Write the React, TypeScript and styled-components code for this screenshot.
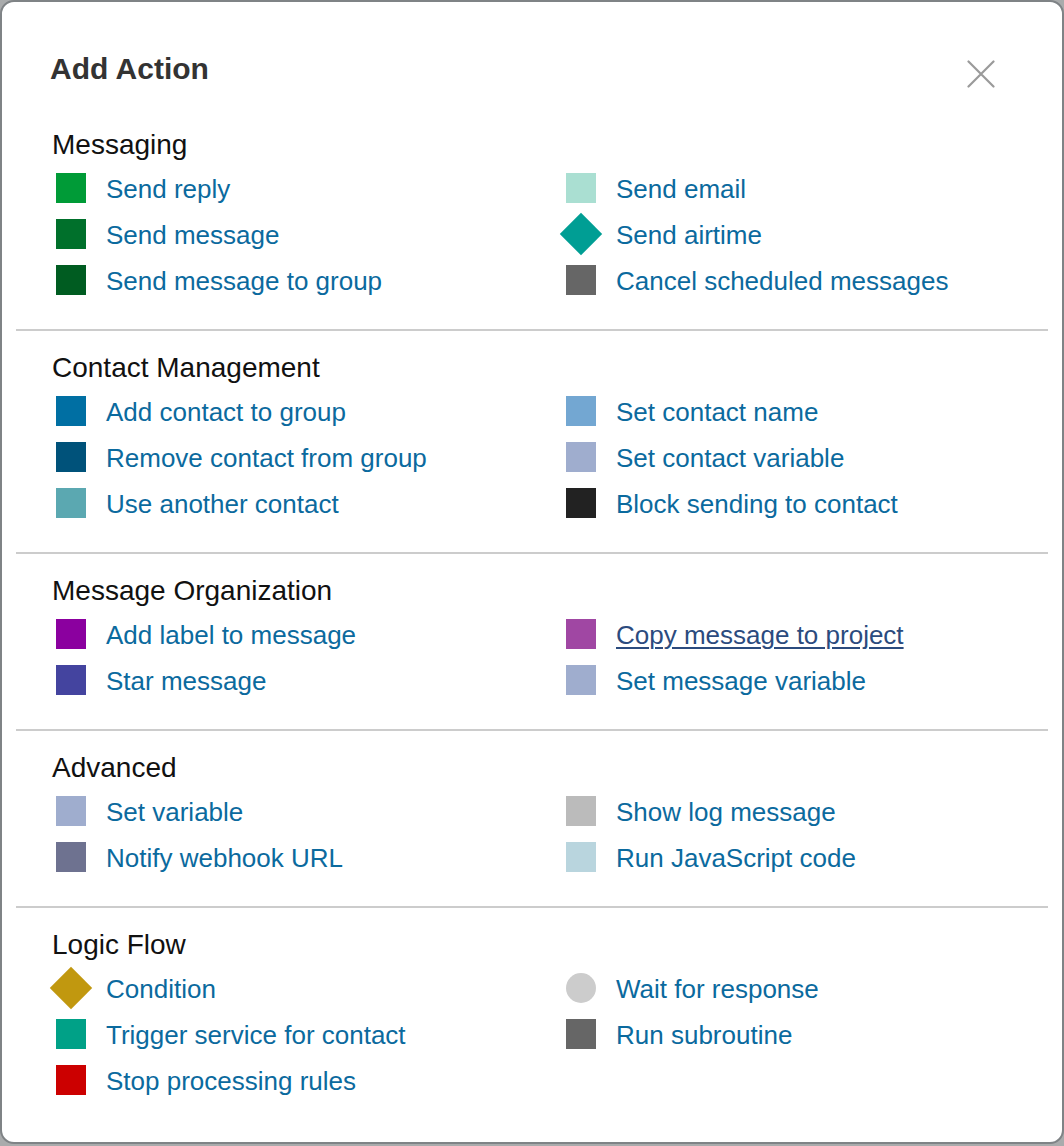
import React from "react";
import styled, { createGlobalStyle, css } from "styled-components";

const Global = createGlobalStyle`
  html, body {
    margin: 0;
    padding: 0;
    background: #a9abac;
    font-family: "Liberation Sans", Arial, sans-serif;
  }
  * { box-sizing: border-box; }
`;

const Dialog = styled.div`
  width: 1064px;
  height: 1144px;
  background: #ffffff;
  border: 2px solid #7f8386;
  border-radius: 14px;
  padding: 0 14px;
  overflow: hidden;
`;

const Header = styled.div`
  display: flex;
  justify-content: space-between;
  align-items: flex-start;
  padding: 49px 53px 0 34px;
  margin-bottom: 20px;
`;

const Title = styled.h1`
  margin: 0;
  font-size: 30px;
  line-height: 36px;
  font-weight: 700;
  color: #333333;
`;

const Close = styled.button`
  margin-top: 9px;
  width: 28px;
  height: 28px;
  padding: 0;
  border: 0;
  background: none;
  cursor: pointer;
  display: block;
`;

const Section = styled.section<{ $last?: boolean }>`
  padding: 20px 0 25px 34px;
  border-bottom: ${(p) => (p.$last ? "0" : "2px solid #cccccc")};
`;

const Heading = styled.h2`
  margin: 0 0 4px 0;
  padding-left: 2px;
  font-size: 28px;
  line-height: 34px;
  font-weight: 400;
  color: #111111;
`;

const Grid = styled.div`
  display: grid;
  grid-template-columns: 510px 1fr;
  grid-auto-rows: 46px;
`;

const Item = styled.a<{ $hover?: boolean }>`
  display: flex;
  align-items: center;
  gap: 20px;
  padding-left: 6px;
  font-size: 26px;
  line-height: 30px;
  color: #0b6a9e;
  text-decoration: none;
  cursor: pointer;
  white-space: nowrap;
  ${(p) =>
    p.$hover &&
    css`
      color: #2b4b7e;
      text-decoration: underline;
      text-decoration-thickness: 2px;
      text-underline-offset: 3px;
    `}
`;

type Shape = "square" | "diamond" | "circle";

const Icon = styled.span<{ $color: string; $shape: Shape }>`
  flex: 0 0 30px;
  width: 30px;
  height: 30px;
  margin-top: -2px;
  background: ${(p) => p.$color};
  border-radius: ${(p) => (p.$shape === "circle" ? "50%" : "0")};
  transform: ${(p) => (p.$shape === "diamond" ? "rotate(45deg)" : "none")};
`;

type Action = { label: string; color: string; shape?: Shape; hover?: boolean };
type Group = { title: string; actions: Action[] };

const groups: Group[] = [
  {
    title: "Messaging",
    actions: [
      { label: "Send reply", color: "#009b37" },
      { label: "Send email", color: "#aadfd2" },
      { label: "Send message", color: "#00702b" },
      { label: "Send airtime", color: "#009e94", shape: "diamond" },
      { label: "Send message to group", color: "#005c21" },
      { label: "Cancel scheduled messages", color: "#666666" },
    ],
  },
  {
    title: "Contact Management",
    actions: [
      { label: "Add contact to group", color: "#006fa3" },
      { label: "Set contact name", color: "#73a7d2" },
      { label: "Remove contact from group", color: "#00527a" },
      { label: "Set contact variable", color: "#9fadce" },
      { label: "Use another contact", color: "#5ba8b1" },
      { label: "Block sending to contact", color: "#222222" },
    ],
  },
  {
    title: "Message Organization",
    actions: [
      { label: "Add label to message", color: "#8b009f" },
      { label: "Copy message to project", color: "#a047a3", hover: true },
      { label: "Star message", color: "#44449f" },
      { label: "Set message variable", color: "#9fadce" },
    ],
  },
  {
    title: "Advanced",
    actions: [
      { label: "Set variable", color: "#9fadce" },
      { label: "Show log message", color: "#bbbbbb" },
      { label: "Notify webhook URL", color: "#6e7290" },
      { label: "Run JavaScript code", color: "#b9d5de" },
    ],
  },
  {
    title: "Logic Flow",
    actions: [
      { label: "Condition", color: "#c1980f", shape: "diamond" },
      { label: "Wait for response", color: "#cccccc", shape: "circle" },
      { label: "Trigger service for contact", color: "#00a187" },
      { label: "Run subroutine", color: "#666666" },
      { label: "Stop processing rules", color: "#cc0000" },
    ],
  },
];

export default function App() {
  return (
    <>
      <Global />
      <Dialog>
        <Header>
          <Title>Add Action</Title>
          <Close aria-label="Close">
            <svg width="28" height="28" viewBox="0 0 28 28">
              <path d="M1.5 1.5 L26.5 26.5 M26.5 1.5 L1.5 26.5" stroke="#9a9a9a" strokeWidth="2.2" strokeLinecap="round" />
            </svg>
          </Close>
        </Header>
        {groups.map((g, i) => (
          <Section key={g.title} $last={i === groups.length - 1}>
            <Heading>{g.title}</Heading>
            <Grid>
              {g.actions.map((a) => (
                <Item key={a.label} $hover={a.hover}>
                  <Icon $color={a.color} $shape={a.shape ?? "square"} />
                  {a.label}
                </Item>
              ))}
            </Grid>
          </Section>
        ))}
      </Dialog>
    </>
  );
}
